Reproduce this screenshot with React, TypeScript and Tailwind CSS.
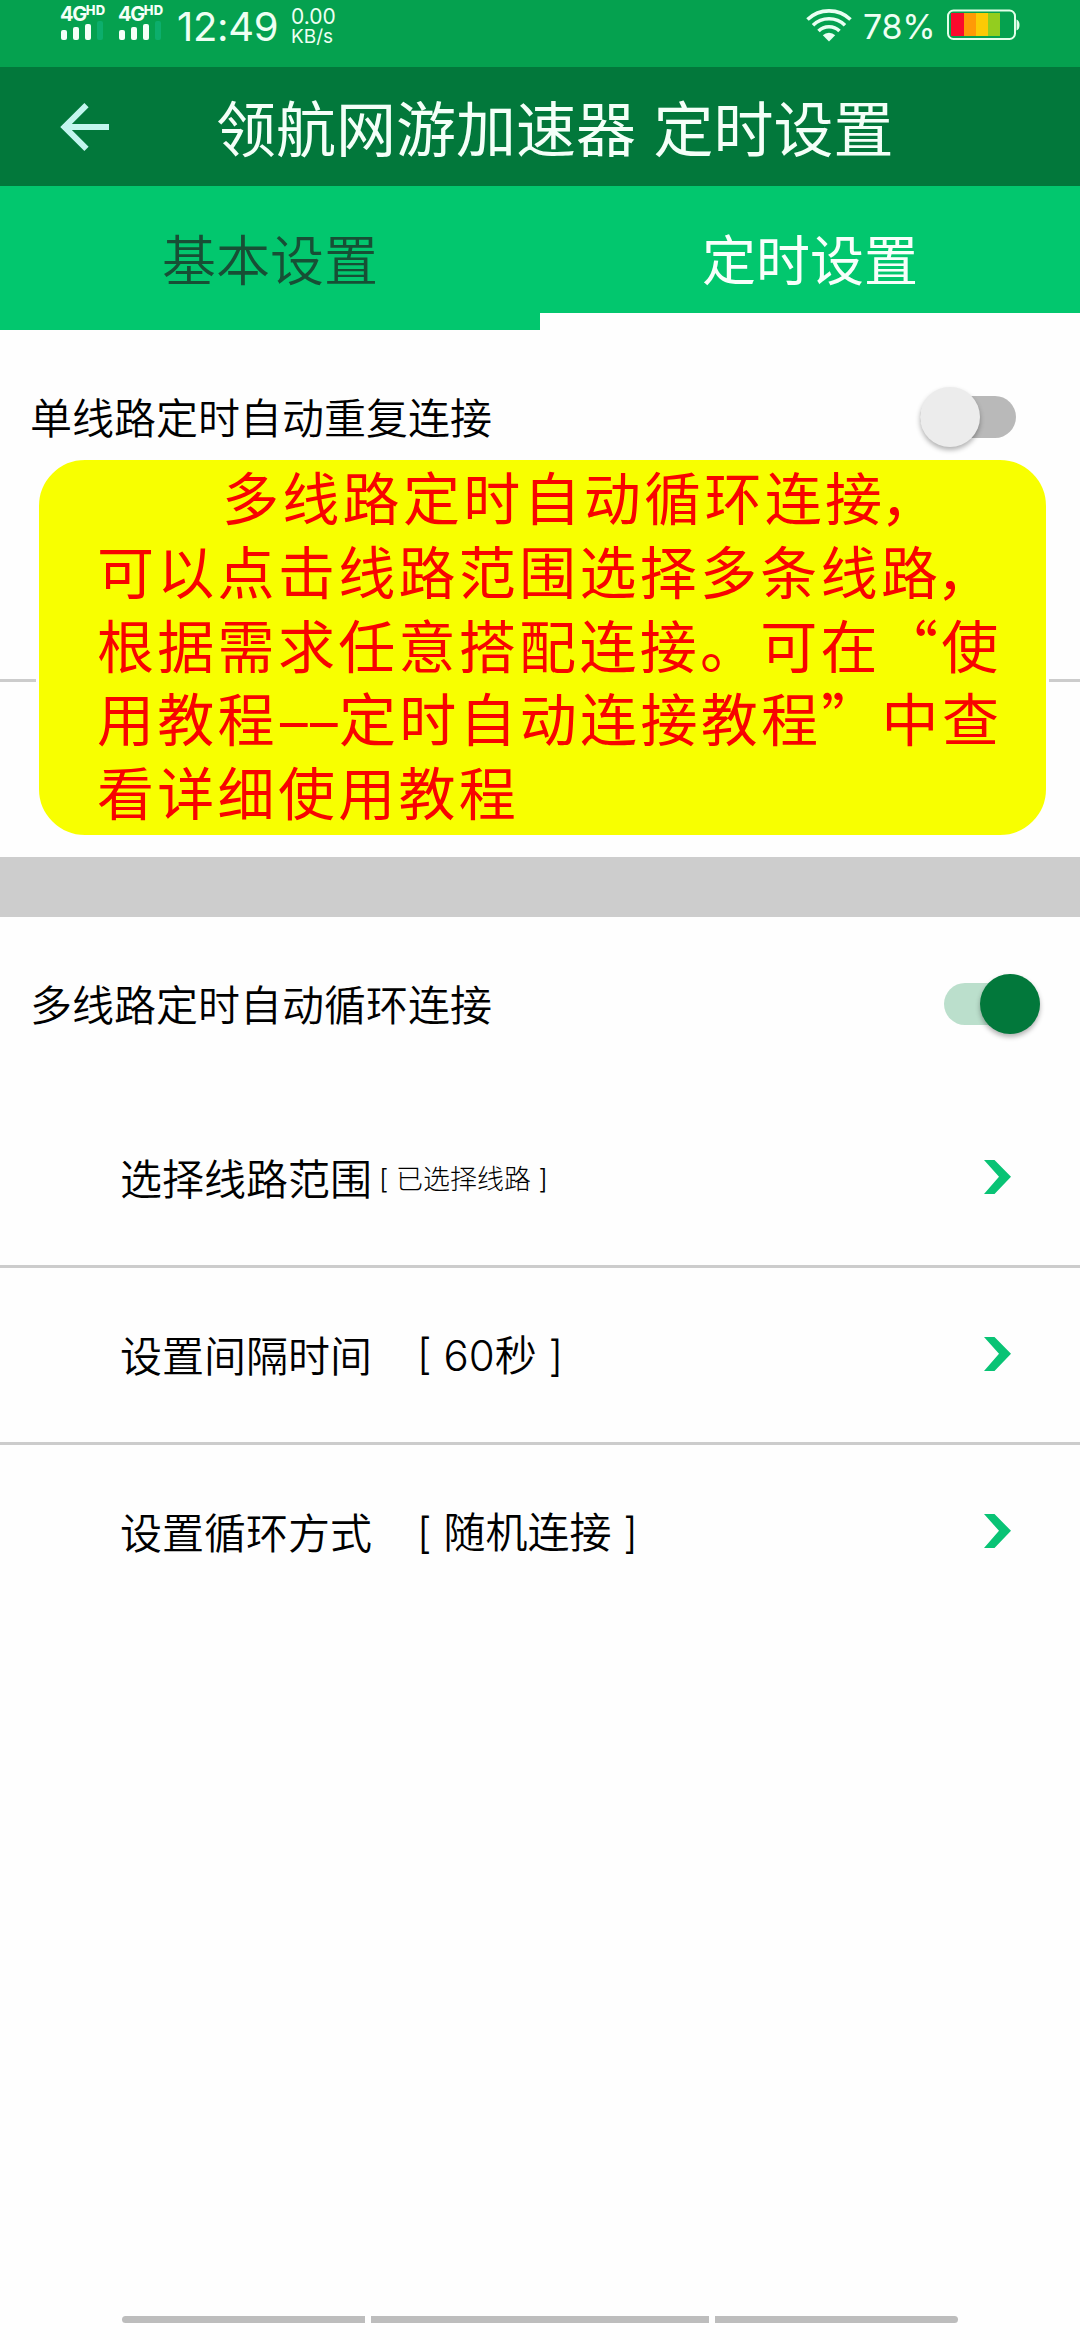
import React, { useState } from 'react';

const SignalIcon: React.FC = () => (
  <div className="w-[45px] mr-[13px]">
    <div className="flex items-start h-[19px] text-[#f4fff8] font-['Inter']">
      <span className="text-[20px] leading-[24px] tracking-[-1.4px] font-bold">4G</span>
      <span className="text-[13px] leading-[17px] tracking-[0.2px] font-extrabold">HD</span>
    </div>
    <svg width="45" height="22" viewBox="0 0 45 22" className="block">
      <rect x="1" y="9" width="6" height="10" rx="2" fill="#f4fff8" />
      <rect x="13" y="6" width="6" height="13" rx="2" fill="#f4fff8" />
      <rect x="25" y="3" width="6" height="16" rx="2" fill="#f4fff8" />
      <rect x="37" y="0" width="6" height="19" rx="2" fill="#0cae6c" />
    </svg>
  </div>
);

const WifiIcon: React.FC = () => (
  <svg width="46" height="34" viewBox="0 0 46 34" fill="none" stroke="#e9fff2" strokeWidth="3.6">
    <path d="M1.5 11.5 A31 31 0 0 1 44.5 11.5" />
    <path d="M7 17.3 A23 23 0 0 1 39 17.3" />
    <path d="M12.5 23 A15 15 0 0 1 33.5 23" />
    <path d="M23 33.5 L16.8 27.3 A8.6 8.6 0 0 1 29.2 27.3 Z" fill="#e9fff2" stroke="none" />
  </svg>
);

const BatteryIcon: React.FC = () => (
  <svg width="73" height="32" viewBox="0 0 73 32">
    <rect x="1" y="1.5" width="67" height="28.5" rx="5.5" fill="none" stroke="#e3ffe9" strokeWidth="2" />
    <path d="M69.5 10.5 q3 1 3 5.5 t-3 5.5 z" fill="#e3ffe9" />
    <rect x="4" y="4" width="13" height="23" fill="#fb0a2c" />
    <rect x="17" y="4" width="12" height="23" fill="#ff9a06" />
    <rect x="29" y="4" width="12" height="23" fill="#fcca05" />
    <rect x="41" y="4" width="12" height="23" fill="#93cd1f" />
  </svg>
);

const StatusBar: React.FC = () => (
  <div className="flex items-start h-[67px] bg-[#05a14f] text-[#eefff3] font-['Inter']">
    <div className="flex pl-[60px] pt-[2px]">
      <SignalIcon />
      <SignalIcon />
    </div>
    <span className="ml-[1px] pt-[4px] text-[40px] leading-[46px] tracking-[-0.3px] w-[114px] whitespace-nowrap">
      12:49
    </span>
    <div className="flex flex-col pt-[7px] text-[19px] leading-[20px]">
      <span className="text-[21px]">0.00</span>
      <span>KB/s</span>
    </div>
    <div className="flex items-start ml-auto pr-[60px]">
      <div className="pt-[8px]">
        <WifiIcon />
      </div>
      <span className="ml-[11px] w-[84px] pt-[7px] text-[34px] leading-[40px] tracking-[-0.3px] whitespace-nowrap">
        78%
      </span>
      <div className="pt-[9px]">
        <BatteryIcon />
      </div>
    </div>
  </div>
);

const Header: React.FC = () => (
  <header className="flex items-center h-[119px] pl-[60px] bg-[#02783b]">
    <svg width="49" height="48" viewBox="0 0 49 48" fill="none" stroke="#c3f6ef" strokeWidth="6">
      <path d="M49 24 H6" />
      <path d="M26.5 2.2 L4.5 24 L26.5 45.8" />
    </svg>
    <h1 className="ml-[107px] pb-[1px] text-[60px] leading-[60px] [word-spacing:4px] text-[#f4fff8] whitespace-nowrap">
      领航网游加速器 定时设置
    </h1>
  </header>
);

const Toggle: React.FC<{ checked: boolean; onChange: () => void }> = ({ checked, onChange }) => (
  <button
    onClick={onChange}
    aria-pressed={checked}
    className={`flex items-center w-[96px] h-[42px] rounded-full ${
      checked ? 'justify-end bg-[#bbdfcc] mr-[40px]' : 'justify-start bg-[#b9b9b9] mr-[64px]'
    }`}
  >
    <span
      className={`size-[60px] shrink-0 rounded-full shadow-[0_3px_5px_rgba(0,0,0,0.3)] ${
        checked ? 'bg-[#02783b]' : 'bg-[#ececec]'
      }`}
    />
  </button>
);

const ToggleRow: React.FC<{ label: string; checked: boolean; onChange: () => void }> = ({ label, checked, onChange }) => (
  <div className="flex items-center justify-between h-[174px] pl-[30px]">
    <span className="pb-[3px] text-[42px] leading-[60px] font-[350]">{label}</span>
    <Toggle checked={checked} onChange={onChange} />
  </div>
);

const rows = [
  { label: '选择线路范围', value: '[ 已选择线路 ]', small: true },
  { label: '设置间隔时间', value: '[ 60秒 ]', small: false },
  { label: '设置循环方式', value: '[ 随机连接 ]', small: false },
];

const App: React.FC = () => {
  const [single, setSingle] = useState(false);
  const [multi, setMulti] = useState(true);

  return (
    <div
      lang="zh-CN"
      className="relative flex flex-col w-[1080px] h-[2340px] overflow-hidden bg-[#fefefe] text-black font-['Noto_Sans_CJK_SC',sans-serif]"
    >
      <StatusBar />
      <Header />

      {/* Tabs */}
      <nav className="flex h-[144px] bg-[#02c76e] text-[54px] leading-[60px]">
        <button className="w-1/2 pt-[42px] pb-[42px] text-[#174f35] font-[350]">基本设置</button>
        <button className="w-1/2 pt-[25px] pb-[8px] border-b-[17px] border-[#fefefe] text-[#f8fffb]">定时设置</button>
      </nav>

      <ToggleRow label="单线路定时自动重复连接" checked={single} onChange={() => setSingle(!single)} />
      <div className="h-[178px] border-b-3 border-[#cccccc]" />
      <div className="h-[175px]" />
      <div className="h-[60px] bg-[#cdcdcd]" />

      <ToggleRow label="多线路定时自动循环连接" checked={multi} onChange={() => setMulti(!multi)} />
      {rows.map((row, index) => (
        <div
          key={row.label}
          className={`flex items-center h-[177px] pl-[120px] pr-[69px] ${
            index < rows.length - 1 ? 'border-b-3 border-[#cccccc]' : 'pb-[3px]'
          }`}
        >
          <span className="pb-[2px] text-[42px] leading-[60px] font-[350]">{row.label}</span>
          <span
            className={
              row.small
                ? "ml-[7px] pt-[3px] text-[27px] leading-[40px] font-['Inter','Noto_Sans_CJK_SC',sans-serif] font-light"
                : "ml-[45px] pt-[2px] text-[42px] leading-[60px] font-['Inter','Noto_Sans_CJK_SC',sans-serif] font-[350]"
            }
          >
            {row.value}
          </span>
          <svg width="27" height="34" viewBox="0 0 27 34" className="ml-auto mb-[2px]" fill="#09c375">
            <path d="M0 0 H10.5 L27 16.8 L10.5 34 H0 L15 16.8 Z" />
          </svg>
        </div>
      ))}

      {/* Gesture bar */}
      <div className="flex gap-[6px] mt-auto mb-[17px] ml-[122px] h-[7px]">
        <div className="w-[243px] rounded-l-full bg-[#bdbdbd]" />
        <div className="w-[338px] bg-[#bdbdbd]" />
        <div className="w-[243px] rounded-r-full bg-[#bdbdbd]" />
      </div>

      {/* Tip bubble over the settings */}
      <div className="absolute left-[36px] top-[457px] w-[1013px] h-[381px] rounded-[49px] border-3 border-[#fefefe] bg-[#f8ff00] pl-[58px] text-[57px] leading-[73.8px] tracking-[3.3px] text-[#f80400] whitespace-nowrap">
        <div className="-mt-[1px]">
          <p className="pl-[125px]">
            多线路定时自动循环连接<span className="-ml-[5px]">，</span>
          </p>
          <p>
            可以点击线路范围选择多条线路<span className="-ml-[5px]">，</span>
          </p>
          <p>根据需求任意搭配连接。可在“使</p>
          <p>
            用教程
            <span className="inline-block w-[61px] tracking-[-4px]">
              <span className="inline-block origin-left -ml-[3px] scale-x-[1.9]">--</span>
            </span>
            定时自动连接教程”中查
          </p>
          <p>看详细使用教程</p>
        </div>
      </div>
    </div>
  );
};

export default App;
